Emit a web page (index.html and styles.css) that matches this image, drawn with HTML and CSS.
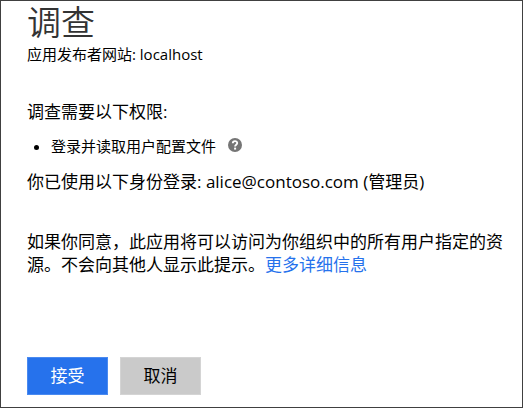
FILE: index.html
```html
<!DOCTYPE html>
<html lang="zh-CN">
<head>
<meta charset="utf-8">
<title>调查</title>
<link rel="stylesheet" href="styles.css">
</head>
<body>
<main class="consent">
  <h1 class="title">调查</h1>
  <p class="publisher">应用发布者网站: localhost</p>
  <h2 class="heading">调查需要以下权限:</h2>
  <ul class="permissions">
    <li class="permission">登录并读取用户配置文件
      <button class="help" type="button" aria-label="帮助">
        <svg viewBox="0 0 14 14" aria-hidden="true"><circle cx="7" cy="7" r="7" fill="#757575"/><path d="M4.8 5.2C4.8 2.4 9.3 2.5 9.2 5.1C9.2 6.8 7.1 6.6 7.1 8.6" fill="none" stroke="#fff" stroke-width="1.9"/><rect x="6.1" y="9.6" width="2" height="2" fill="#fff"/></svg>
      </button>
    </li>
  </ul>
  <p class="account">你已使用以下身份登录: alice@contoso.com (管理员)</p>
  <p class="notice">如果你同意，此应用将可以访问为你组织中的所有用户指定的资源。不会向其他人显示此提示。<a class="more" href="#">更多详细信息</a></p>
  <div class="actions">
    <button class="button primary" type="button">接受</button>
    <button class="button" type="button">取消</button>
  </div>
</main>
</body>
</html>
```
FILE: styles.css
```css
* {
  box-sizing: border-box;
}

body {
  margin: 0;
  background: #fff;
  color: #000;
  font-family: "Open Sans", "Noto Sans CJK SC", sans-serif;
  font-size: 17px;
  line-height: 24px;
}

h1, h2, p, ul {
  margin: 0;
  padding: 0;
  font-weight: 400;
}

.consent {
  min-height: 100vh;
  padding: 0 16px 8px 26px;
  border: 1px solid #404040;
}

.title {
  color: #333;
  font-family: "Noto Sans CJK SC", sans-serif;
  font-size: 34px;
  font-weight: 350;
  line-height: 40px;
}

.publisher {
  margin-top: 1px;
  font-size: 15px;
}

.heading {
  margin-top: 34px;
  font-size: 17px;
}

.permissions {
  margin: 10px 0 12px;
  padding-left: 24px;
  font-size: 15px;
}

.help {
  width: 14px;
  height: 14px;
  margin-left: 8px;
  padding: 0;
  border: 0;
  background: none;
}

.help svg {
  display: block;
}

.notice {
  margin-top: 36px;
  line-height: 23px;
}

.more {
  color: #2672ec;
  text-decoration: none;
}

.actions {
  display: flex;
  gap: 12px;
  margin-top: 81px;
}

.button {
  width: 81px;
  height: 38px;
  padding: 0;
  border: 1px solid #d4d4d4;
  background: #cacaca;
  color: #000;
  font: inherit;
}

.primary {
  border-color: #4a8af0;
  background: #2672ec;
  color: #fff;
}
```
